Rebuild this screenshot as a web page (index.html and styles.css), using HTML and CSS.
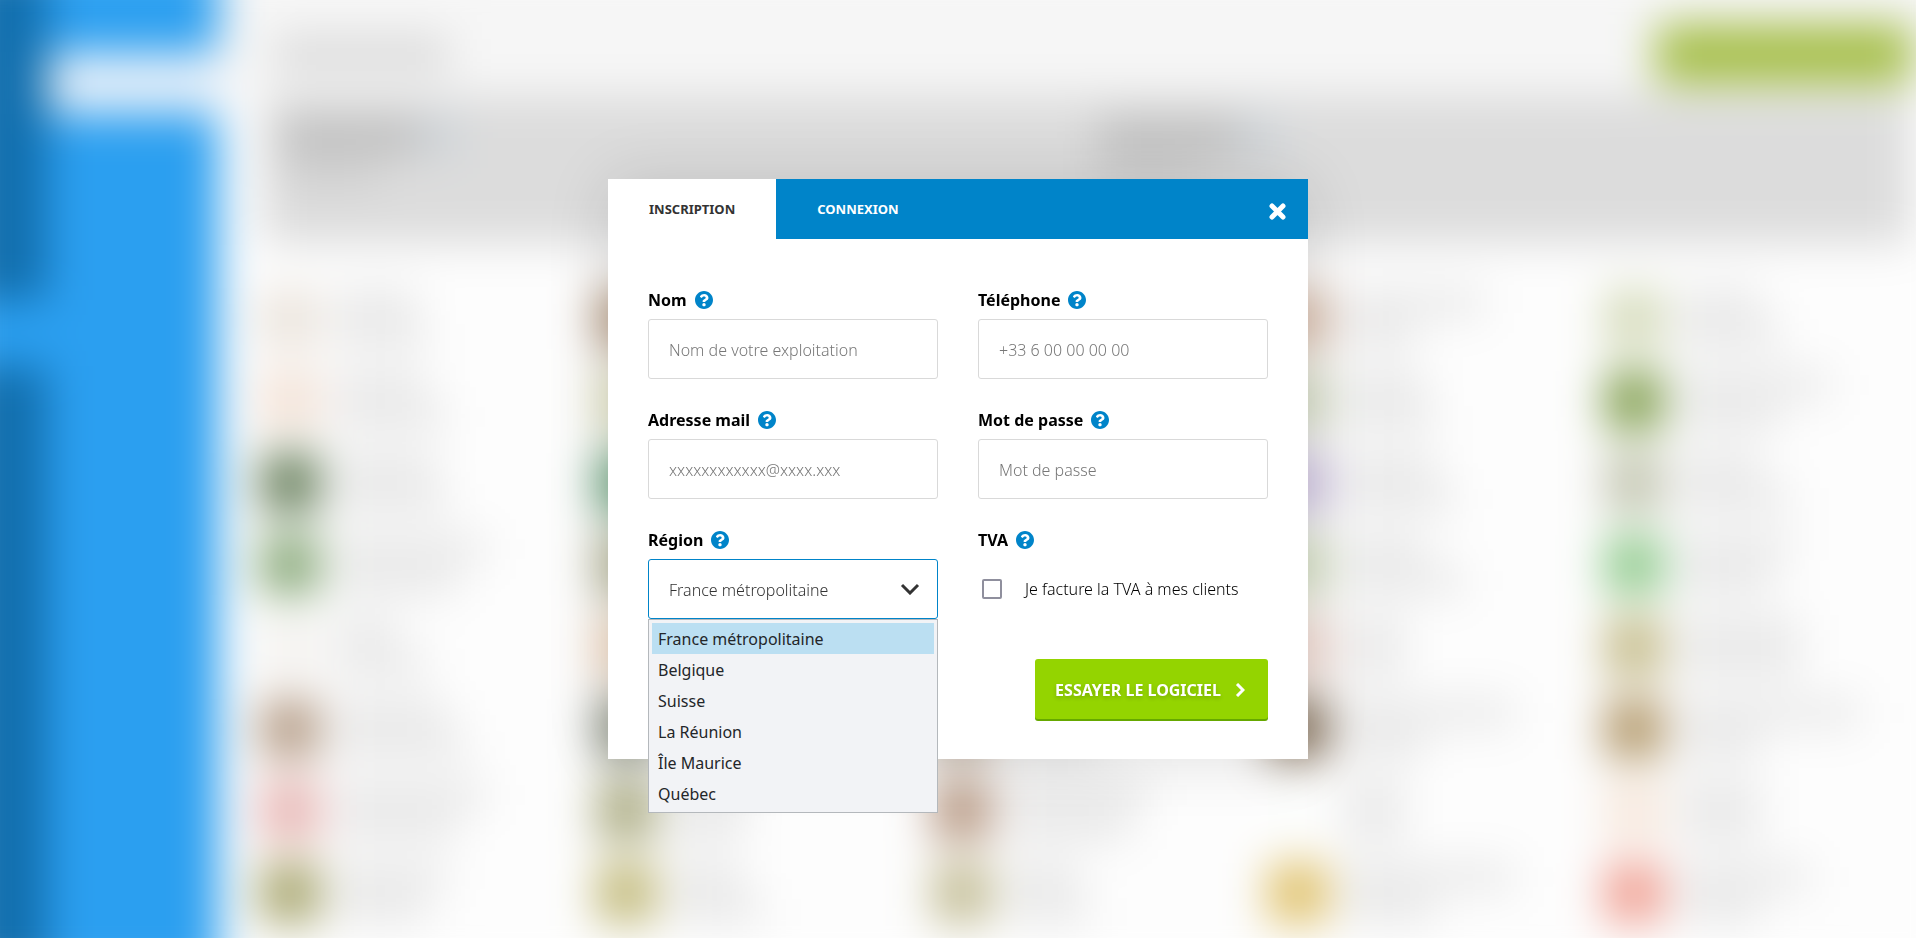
FILE: index.html
```html
<!DOCTYPE html>
<html lang="fr">
<head>
  <meta charset="UTF-8" />
  <meta name="viewport" content="width=device-width, initial-scale=1.0"/>
  <title>Inscription</title>
  <link rel="stylesheet" href="styles.css">
</head>
<body>

  <svg class="sprite" aria-hidden="true">
    <symbol id="icon-help" viewBox="8 8 496 496">
      <path d="M504 256c0 136.997-111.043 248-248 248S8 392.997 8 256C8 119.083 119.043 8 256 8s248 111.083 248 248zM262.655 90c-54.497 0-89.255 22.957-116.549 63.758-3.536 5.286-2.353 12.415 2.715 16.258l34.699 26.31c5.205 3.947 12.621 3.008 16.665-2.122 17.864-22.658 30.113-35.797 57.303-35.797 20.429 0 45.698 13.148 45.698 32.958 0 14.976-12.363 22.667-32.534 33.976C247.128 238.528 216 254.941 216 296v4c0 6.627 5.373 12 12 12h56c6.627 0 12-5.373 12-12v-1.333c0-28.462 83.186-29.647 83.186-106.667 0-58.002-60.165-102-116.531-102zM256 338c-25.365 0-46 20.635-46 46 0 25.364 20.635 46 46 46s46-20.636 46-46c0-25.365-20.635-46-46-46z"/>
    </symbol>
  </svg>

  <!-- Application behind the popup -->
  <div class="app" aria-hidden="true">
    <div class="sidebar">
      <div class="rail">
        <div class="rail-top"></div>
        <div class="rail-active"></div>
        <div class="rail-bottom"></div>
      </div>
      <div class="menu">
        <div class="menu-logo"></div>
      </div>
    </div>
    <div class="main">
      <div class="topbar">
        <div class="topbar-title"></div>
        <div class="topbar-button"></div>
      </div>
      <div class="summary">
        <div class="summary-col">
          <div class="summary-title"></div>
          <div class="summary-text"></div>
        </div>
        <div class="summary-col">
          <div class="summary-title"></div>
          <div class="summary-text"></div>
        </div>
      </div>
      <div class="products" id="products"></div>
    </div>
  </div>

  <!-- Popup -->
  <div class="overlay">
    <div class="modal" role="dialog" aria-modal="true">
      <div class="modal-header">
        <button type="button" class="tab active">Inscription</button>
        <button type="button" class="tab">Connexion</button>
        <button type="button" class="close" aria-label="Fermer">
          <svg width="17" height="17" viewBox="0 0 17 17"><path d="M3 3l11 11M14 3L3 14"/></svg>
        </button>
      </div>

      <form class="modal-body">
        <div class="fields">
          <div class="field">
            <div class="field-label">
              <label for="nom">Nom</label>
              <svg class="help"><use href="#icon-help"/></svg>
            </div>
            <input type="text" id="nom" class="control" placeholder="Nom de votre exploitation">
          </div>

          <div class="field">
            <div class="field-label">
              <label for="telephone">Téléphone</label>
              <svg class="help"><use href="#icon-help"/></svg>
            </div>
            <input type="tel" id="telephone" class="control" placeholder="+33 6 00 00 00 00">
          </div>

          <div class="field">
            <div class="field-label">
              <label for="email">Adresse mail</label>
              <svg class="help"><use href="#icon-help"/></svg>
            </div>
            <input type="email" id="email" class="control" placeholder="xxxxxxxxxxxx@xxxx.xxx">
          </div>

          <div class="field">
            <div class="field-label">
              <label for="password">Mot de passe</label>
              <svg class="help"><use href="#icon-help"/></svg>
            </div>
            <input type="password" id="password" class="control" placeholder="Mot de passe">
          </div>

          <div class="field">
            <div class="field-label">
              <label for="region">Région</label>
              <svg class="help"><use href="#icon-help"/></svg>
            </div>
            <div class="select">
              <select id="region" class="control open">
                <option selected>France métropolitaine</option>
                <option>Belgique</option>
                <option>Suisse</option>
                <option>La Réunion</option>
                <option>Île Maurice</option>
                <option>Québec</option>
              </select>
              <svg class="select-arrow" viewBox="0 0 20 12"><path d="M2 2l8 8 8-8"/></svg>
              <ul class="select-list" role="listbox">
                <li role="option" aria-selected="true" class="selected">France métropolitaine</li>
                <li role="option">Belgique</li>
                <li role="option">Suisse</li>
                <li role="option">La Réunion</li>
                <li role="option">Île Maurice</li>
                <li role="option">Québec</li>
              </ul>
            </div>
          </div>

          <div class="field">
            <div class="field-label">
              <span>TVA</span>
              <svg class="help"><use href="#icon-help"/></svg>
            </div>
            <div class="check">
              <input type="checkbox" id="tva">
              <label for="tva">Je facture la TVA à mes clients</label>
            </div>
          </div>
        </div>

        <div class="actions">
          <button type="submit" class="submit">
            Essayer le logiciel
            <svg width="10" height="14" viewBox="0 0 10 14"><path d="M2 1l6 6-6 6"/></svg>
          </button>
        </div>
      </form>
    </div>
  </div>

  <script src="script.js"></script>
</body>
</html>
```

FILE: styles.css
```css
* {
  box-sizing: border-box;
}

body {
  margin: 0;
  font-family: "Noto Sans", "Open Sans", sans-serif;
  font-size: 16px;
  color: #000;
}

button,
input,
select {
  font-family: inherit;
}

.sprite {
  position: absolute;
  width: 0;
  height: 0;
}

/* Application, 40px larger than the window so the blur has no pale edge */
.app {
  position: fixed;
  inset: -40px;
  display: flex;
  overflow: hidden;
  background: #fdfdfd;
  filter: blur(22px);
}

.sidebar {
  display: flex;
  flex: none;
  width: 258px;
  background: #2b9ff0;
}

.rail {
  display: flex;
  flex-direction: column;
  width: 88px;
}

.rail-top {
  height: 340px;
  background: #126fae;
}

.rail-active {
  height: 66px;
}

.rail-bottom {
  flex: 1;
  background: #126fae;
}

.menu {
  flex: 1;
  padding-top: 92px;
}

.menu-logo {
  height: 62px;
  background: #e4effa;
}

.main {
  flex: 1;
  min-width: 0;
}

.topbar {
  display: flex;
  justify-content: space-between;
  align-items: center;
  height: 136px;
  padding: 52px 44px 0 56px;
  background: #f6f6f6;
}

.topbar-title {
  width: 175px;
  height: 36px;
  background: #dadada;
}

.topbar-button {
  width: 256px;
  height: 60px;
  background: #a6bf4a;
}

.summary {
  display: flex;
  gap: 24px;
  height: 148px;
  margin: 0 46px 0 46px;
  padding: 22px 16px;
  background: #dcdcdc;
}

.summary-col {
  flex: 1;
}

.summary-title {
  width: 140px;
  height: 36px;
  background: #bebebe;
  box-shadow: 40px 0 0 #ccd3d9;
}

.summary-text {
  width: 100px;
  height: 28px;
  margin-top: 4px;
  background: #d0d0d0;
}

.products {
  display: grid;
  grid-template-columns: repeat(5, 1fr);
  grid-auto-rows: 82px;
  margin: 34px 16px 0 42px;
}

.product {
  display: flex;
  align-items: center;
  gap: 16px;
}

.product-picture {
  width: 60px;
  height: 60px;
}

.product-line {
  height: 32px;
  background: #eaeaea;
}

/* Popup */
.overlay {
  position: fixed;
  inset: 0;
  display: flex;
  justify-content: center;
  align-items: center;
}

.modal {
  width: 700px;
  max-width: 100%;
  background: #fff;
  box-shadow: 0 0 60px rgba(0, 0, 0, 0.12);
}

.modal-header {
  display: flex;
  height: 60px;
  background: #0084c9;
}

.tab {
  padding: 0 41px;
  border: 0;
  background: none;
  color: #fff;
  font-size: 13px;
  font-weight: 700;
  text-transform: uppercase;
  cursor: pointer;
}

.tab.active {
  background: #fff;
  color: #333;
}

.close {
  display: flex;
  align-items: center;
  margin-left: auto;
  padding: 4px 22px 0;
  border: 0;
  background: none;
  cursor: pointer;
}

.close path {
  fill: none;
  stroke: #fff;
  stroke-width: 5;
  stroke-linecap: round;
}

.modal-body {
  padding: 50px 40px 40px;
}

.fields {
  display: grid;
  grid-template-columns: 1fr 1fr;
  gap: 30px 40px;
}

.field-label {
  display: flex;
  align-items: center;
  gap: 8px;
  height: 22px;
  margin-bottom: 8px;
  font-weight: 700;
}

.help {
  width: 18px;
  height: 18px;
  fill: #0084c9;
}

.control {
  display: block;
  width: 100%;
  height: 60px;
  padding: 1px 20px 0;
  border: 1px solid #d9d9d9;
  border-radius: 3px;
  outline: none;
  background: #fff;
  color: #333;
  font-size: 16px;
  font-weight: 300;
}

.control::placeholder {
  color: #777;
  opacity: 1;
}

.control.open {
  border-color: #0084c9;
}

.select {
  position: relative;
}

.select select {
  appearance: none;
}

.select-arrow {
  position: absolute;
  top: 24px;
  right: 18px;
  width: 20px;
  height: 12px;
  fill: none;
  stroke: #333;
  stroke-width: 3;
  pointer-events: none;
}

.select-list {
  position: absolute;
  top: 100%;
  left: 0;
  right: 0;
  margin: 0;
  padding: 3px;
  border: 1px solid #b4b8bc;
  background: #f2f3f6;
  color: #232629;
  list-style: none;
}

.select-list li {
  padding: 1px 6px 0;
  line-height: 30px;
}

.select-list .selected {
  background: #bbdff2;
}

.check {
  display: flex;
  align-items: center;
  height: 60px;
  gap: 23px;
  padding-left: 4px;
  font-weight: 300;
}

.check input {
  appearance: none;
  width: 20px;
  height: 20px;
  margin: 0;
  border: 2px solid #8f8f9d;
  border-radius: 2px;
  background: #fff;
}

.actions {
  display: flex;
  justify-content: flex-end;
  margin-top: 40px;
}

.submit {
  display: flex;
  align-items: center;
  gap: 14px;
  height: 60px;
  padding: 1px 23px 0 20px;
  border: 0;
  border-radius: 3px;
  background: #94d400;
  box-shadow: 0 2px 0 #66a800;
  color: #fff;
  font-size: 16px;
  font-weight: 700;
  text-transform: uppercase;
  text-shadow: 0 2px 4px rgba(0, 0, 0, 0.2);
  cursor: pointer;
}

.submit path {
  fill: none;
  stroke: #fff;
  stroke-width: 3;
}
```

FILE: script.js
```js
// Picture colour and name widths of each product, row by row
const products = [
  ["#ebe4dc", 80, 90], ["#b59a80", 90, 70], ["#d8d0c0", 90, 80], ["#d6b8a4", 140, 70], ["#d6dcbc", 80, 100],
  ["#f3e2d6", 90, 110], ["#dcdcb8", 80, 90], ["#d0d4c0", 100, 70], ["#cfd6bc", 80, 90], ["#86a255", 150, 100],
  ["#6c8360", 100, 110], ["#68a37a", 90, 80], ["#c8c8b4", 90, 80], ["#c9bcdc", 90, 110], ["#c4c7b2", 80, 110],
  ["#8bab7c", 150, 120], ["#b4b494", 110, 80], ["#c4c0a8", 90, 90], ["#cfdabb", 80, 120], ["#93cc90", 110, 90],
  ["#f4f2ef", 60, 90], ["#efd2b6", 80, 90], ["#d4c8b8", 90, 90], ["#eed2c8", 60, 60], ["#c6bd8c", 120, 120],
  ["#b79f8a", 110, 130], ["#8b9080", 90, 80], ["#c0b0a0", 90, 90], ["#86715a", 170, 80], ["#b49a6c", 180, 80],
  ["#e8b6b4", 150, 120], ["#adad84", 80, 70], ["#b99b86", 140, 120], ["#fcfdfc", 60, 60], ["#f7e8dc", 80, 80],
  ["#a9a770", 110, 90], ["#c3bb7c", 70, 90], ["#c5bf98", 70, 80], ["#e0c26c", 170, 90], ["#f0a295", 130, 80]
];

const list = document.getElementById("products");

products.forEach(([color, first, second]) => {
  const product = document.createElement("div");
  product.className = "product";
  product.innerHTML =
    '<div class="product-picture" style="background:' + color + '"></div>' +
    '<div>' +
      '<div class="product-line" style="width:' + first + 'px"></div>' +
      '<div class="product-line" style="width:' + second + 'px"></div>' +
    '</div>';
  list.appendChild(product);
});
```
